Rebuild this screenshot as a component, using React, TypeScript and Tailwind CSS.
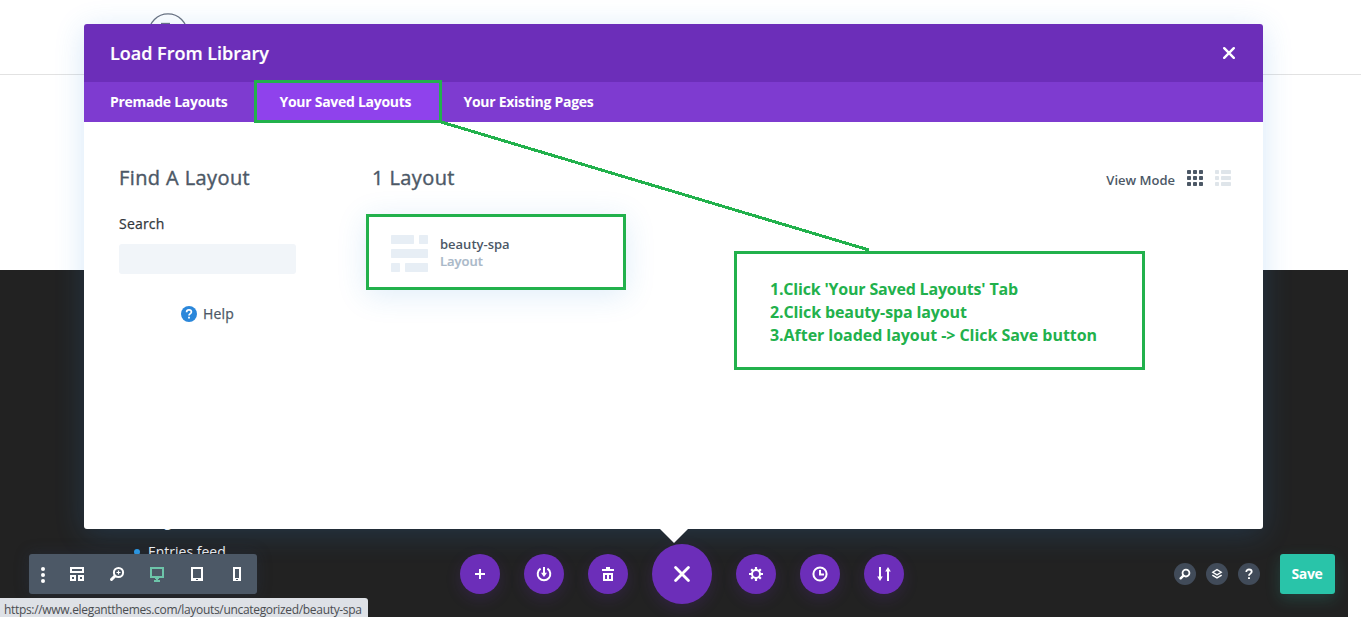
import type { ReactNode } from 'react';

function Icon({ size = 16, className = '', children }: { size?: number; className?: string; children: ReactNode }) {
  return (
    <svg width={size} height={size} viewBox="0 0 16 16" fill="none" stroke="currentColor" strokeWidth="2" className={`shrink-0 ${className}`}>
      {children}
    </svg>
  );
}

const viewportIcons: { name: string; color: string; art: ReactNode }[] = [
  {
    name: 'wireframe',
    color: 'text-white',
    art: (
      <>
        <rect x="2" y="2" width="12" height="4" />
        <rect x="2" y="10" width="4" height="4" />
        <rect x="10" y="10" width="4" height="4" />
      </>
    ),
  },
  {
    name: 'zoom',
    color: 'text-white',
    art: (
      <>
        <circle cx="9.5" cy="6.5" r="4.6" />
        <path d="M6 10l-3.5 3.5" strokeWidth="3" strokeLinecap="round" />
        <path d="M7.5 6.5h4M9.5 4.5v4" strokeWidth="1.2" />
      </>
    ),
  },
  {
    name: 'desktop',
    color: 'text-[#6dc4a9]',
    art: (
      <>
        <rect x="2" y="2" width="12" height="9" />
        <path d="M6 12h4M7 13h2M5 15h6" />
      </>
    ),
  },
  {
    name: 'tablet',
    color: 'text-white',
    art: (
      <>
        <rect x="3" y="2" width="10" height="12" />
        <path d="M3 13h10" />
        <path d="M7 13.5h2" stroke="#4c5866" strokeWidth="1" />
      </>
    ),
  },
  {
    name: 'phone',
    color: 'text-white',
    art: (
      <>
        <rect x="5" y="2" width="6" height="12" />
        <path d="M5 13h6" />
        <path d="M7 13.5h2" stroke="#4c5866" strokeWidth="1" />
      </>
    ),
  },
];

const actions: { name: string; art: ReactNode; big?: boolean }[] = [
  { name: 'add', art: <path d="M3 8h10M8 3v10" /> },
  {
    name: 'load',
    art: (
      <>
        <path d="M4.6 2.7a6.3 6.3 0 1 0 6.8 0" />
        <path d="M8 1v7" />
        <path d="M5 6.8h6L8 11z" fill="currentColor" stroke="none" />
      </>
    ),
  },
  {
    name: 'clear',
    art: (
      <>
        <path d="M2 4h12" />
        <path d="M6 2h4" />
        <path d="M4 8v6h8V8z" />
        <path d="M8 7v7" />
      </>
    ),
  },
  { name: 'close', big: true, art: <path d="M1.6 1.6l12.8 12.8M14.4 1.6L1.6 14.4" strokeWidth="2.8" strokeLinecap="round" /> },
  {
    name: 'settings',
    art: (
      <>
        <circle cx="8" cy="8" r="4" />
        <path
          d="M8 4V1M8 12v3M4 8H1M12 8h3M5.2 5.2L3.2 3.2M10.8 5.2l2-2M5.2 10.8l-2 2M10.8 10.8l2 2"
          strokeWidth="2.2"
        />
      </>
    ),
  },
  {
    name: 'history',
    art: (
      <>
        <circle cx="8" cy="8" r="6.6" />
        <path d="M8 4v4.6h4" />
      </>
    ),
  },
  {
    name: 'portability',
    art: (
      <>
        <path d="M4 1v10M12 5v10" />
        <path d="M1.2 10.5h5.6L4 15zM9.2 5.5h5.6L12 1z" fill="currentColor" stroke="none" />
      </>
    ),
  },
];

const helpers: ReactNode[] = [
  <>
    <circle cx="9.3" cy="6.7" r="4.6" strokeWidth="2.4" />
    <path d="M5.6 10.4l-3.4 3.4" strokeWidth="3.2" strokeLinecap="round" />
  </>,
  <>
    <path d="M8 2.2l5.6 3.5L8 9.2 2.4 5.7z" strokeWidth="1.8" />
    <path d="M1.8 9.5L8 13.3l6.2-3.8" strokeWidth="2" />
  </>,
  <>
    <path d="M4.4 5.2C4.4 3.2 5.9 2 8 2s3.6 1.3 3.6 3c0 2.4-3.6 2.6-3.6 5.2" strokeWidth="2.4" />
    <path d="M6.7 13.5h2.6" strokeWidth="2.6" />
  </>,
];

function Modal() {
  return (
    <section className="absolute left-[84px] top-6 flex h-[505px] w-[1179px] flex-col rounded-[3px] bg-white shadow-[0_5px_30px_rgba(43,135,218,0.2)]">
      <header className="flex h-[58px] shrink-0 items-center justify-between rounded-t-[3px] bg-[#6c2eb9] pl-[26px] pr-7 text-white">
        <h1 className="text-[18px] font-semibold [-webkit-text-stroke:0.2px_currentColor]">Load From Library</h1>
        <svg width="12" height="12" viewBox="0 0 12 12" stroke="currentColor" strokeWidth="2.4" strokeLinecap="round">
          <path d="M1.2 1.2l9.6 9.6M10.8 1.2L1.2 10.8" />
        </svg>
      </header>
      <nav className="flex h-10 shrink-0 bg-[#7e3bd0] text-[14px] font-bold tracking-[-0.28px] text-white">
        <div className="flex w-[170px] items-center pb-0.5 pl-[26px]">Premade Layouts</div>
        <div className="-mb-px -mt-0.5 flex w-[188px] items-center border-[3px] border-[#22b14c] bg-[#8f42ec] pl-[22.5px]">
          Your Saved Layouts
        </div>
        <div className="flex items-center pb-0.5 pl-[21.5px]">Your Existing Pages</div>
      </nav>
      <div className="flex flex-1 text-[#4c5866]">
        <aside className="w-[282px] pl-[35px] pt-[42px]">
          <h2 className="text-[20px] leading-7 tracking-[0.4px] [-webkit-text-stroke:0.4px_currentColor]">Find A Layout</h2>
          <label className="mt-[22px] block text-[14px] leading-5 tracking-[0.2px] text-[#32373c] [-webkit-text-stroke:0.25px_currentColor]">
            Search
          </label>
          <div className="mt-2.5 h-[30px] w-[177px] rounded-[3px] bg-[#f1f5f9]" />
          <div className="ml-[62px] mt-[30px] flex items-center gap-1.5 text-[14px] leading-5 tracking-[0.2px] [-webkit-text-stroke:0.25px_currentColor]">
            <svg width="16" height="16" viewBox="0 0 16 16" fill="none">
              <circle cx="8" cy="8" r="8" fill="#2b87da" />
              <path d="M5.6 6.2C5.6 4.7 6.6 3.9 8 3.9s2.4.8 2.4 2.1C10.4 7.6 8 7.7 8 9.6" stroke="#fff" strokeWidth="1.7" />
              <path d="M7.1 11.7h1.8" stroke="#fff" strokeWidth="1.8" />
            </svg>
            Help
          </div>
        </aside>
        <div className="flex-1 pr-8 pt-[42px]">
          <div className="flex justify-between">
            <h2 className="pl-1.5 text-[20px] leading-7 tracking-[0.4px] [-webkit-text-stroke:0.4px_currentColor]">1 Layout</h2>
            <div className="flex h-7 items-center">
              <span className="mr-3 mt-1.5 text-[13px] font-semibold">View Mode</span>
              <svg width="16" height="16" viewBox="0 0 16 16" fill="currentColor" className="mr-3">
                {[0, 6, 12].map((y) => [0, 6, 12].map((x) => <rect key={`${x}-${y}`} x={x} y={y} width="4" height="4" rx="0.8" />))}
              </svg>
              <svg width="16" height="16" viewBox="0 0 16 16" fill="#dfe5ea">
                {[0, 6, 12].map((y) => (
                  <g key={y}>
                    <rect y={y} width="4" height="4" rx="0.8" />
                    <rect x="6" y={y} width="10" height="4" rx="0.8" />
                  </g>
                ))}
              </svg>
            </div>
          </div>
          <div className="mt-[22px] flex h-[76px] w-[260px] items-center border-[3px] border-[#22b14c] bg-white pl-[22px] shadow-[0_5px_30px_rgba(43,135,218,0.15)]">
            <svg width="37" height="37" viewBox="0 0 37 37" fill="#e7eef5" className="mt-0.5">
              <rect width="23" height="9" rx="0.7" />
              <rect x="28" width="9" height="9" rx="0.7" />
              <rect y="14" width="37" height="9" rx="0.7" />
              <rect y="28" width="9" height="9" rx="0.7" />
              <rect x="14" y="28" width="23" height="9" rx="0.7" />
            </svg>
            <div className="ml-3 mt-0.5 text-[13px] font-semibold leading-[17px]">
              <div>beauty-spa</div>
              <div className="text-[#a9b8c8] [-webkit-text-stroke:0.2px_currentColor]">Layout</div>
            </div>
          </div>
        </div>
      </div>
      <svg width="28" height="14" viewBox="0 0 28 14" className="absolute left-[576px] top-[505px]" fill="#fff">
        <path d="M0 0h28L14 14z" />
      </svg>
    </section>
  );
}

function BuilderBar() {
  return (
    <footer className="absolute left-0 top-[544px] flex h-[60px] w-[1361px] items-center pl-[29px] font-semibold text-white">
      <div className="flex h-10 w-[228px] items-center rounded-[3px] bg-[#4c5866] shadow-[0_0_15px_rgba(43,60,90,0.3)]">
        <div className="flex w-7 justify-center">
          <svg width="4" height="16" viewBox="0 0 4 16" fill="currentColor" className="mt-0.5">
            <circle cx="2" cy="2" r="2" />
            <circle cx="2" cy="8" r="2" />
            <circle cx="2" cy="14" r="2" />
          </svg>
        </div>
        {viewportIcons.map((i) => (
          <div key={i.name} className="flex w-10 justify-center">
            <Icon className={i.color}>{i.art}</Icon>
          </div>
        ))}
      </div>
      <div className="ml-[203px] flex items-center gap-6">
        {actions.map((a) => (
          <div
            key={a.name}
            className={`flex items-center justify-center rounded-full bg-[#6c2eb9] shadow-[0_5px_15px_rgba(108,46,185,0.2)] ${a.big ? 'size-[60px]' : 'size-10'}`}
          >
            <Icon>{a.art}</Icon>
          </div>
        ))}
      </div>
      <div className="ml-[270px] flex items-center gap-2.5">
        {helpers.map((art, i) => (
          <div key={i} className="flex size-[22px] items-center justify-center rounded-full bg-[#414b59]">
            <Icon size={12}>{art}</Icon>
          </div>
        ))}
      </div>
      <div className="ml-5 flex h-10 w-[55px] items-center justify-center rounded-[3px] bg-[#29c4a9] pb-0.5 pr-px text-[14px] font-bold tracking-[-0.3px] shadow-[0_5px_15px_rgba(41,196,169,0.2)]">
        Save
      </div>
    </footer>
  );
}

export default function App() {
  return (
    <main className="relative h-[617px] w-[1361px] overflow-hidden bg-white font-['Open_Sans',sans-serif]">
      <div className="h-[75px] border-b border-[#e2e2e2] pl-[148px] pt-[13px]">
        <svg width="40" height="40" viewBox="0 0 40 40" fill="none" stroke="#6b7280" strokeWidth="1.3">
          <circle cx="20" cy="20" r="19.2" />
          <path d="M13 10.5h9" />
        </svg>
      </div>
      <div className="h-[195px]" />
      <div className="h-[347px] w-[1348px] bg-[#222] pl-[134px] pt-[237px] text-[14px] leading-7 text-white">
        <div className="mb-[3px] flex items-center gap-2">
          <span className="size-1.5 rounded-full bg-[#2ea3f2]" />
          <span className="-ml-1.5 pl-px">Blog feed</span>
        </div>
        <div className="flex items-center gap-2">
          <span className="size-1.5 rounded-full bg-[#2ea3f2]" />
          <span>Entries feed</span>
        </div>
      </div>

      <Modal />
      <BuilderBar />

      <div className="absolute left-0 top-[598px] flex h-[19px] w-[368px] items-center rounded-tr-[3px] bg-[#dee1e6] pl-1 pt-1 text-[12px] tracking-[-0.32px] text-[#4a4d51]">
        <span className="whitespace-nowrap">https://www.elegantthemes.com/layouts/uncategorized/beauty-spa</span>
      </div>

      <svg width="430" height="131" viewBox="0 0 430 131" className="absolute left-[441px] top-[120px]" shapeRendering="crispEdges">
        <path d="M0 2L428 130" stroke="#22b14c" strokeWidth="3" />
      </svg>
      <div className="absolute left-[734px] top-[251px] h-[119px] w-[411px] border-[3px] border-[#22b14c] bg-white pl-[33px] pt-6 font-['Open_Sans',sans-serif] text-[16px] font-bold leading-[23px] tracking-[-0.1px] text-[#22b14c]">
        <p className="tracking-[-0.19px]">1.Click 'Your Saved Layouts' Tab</p>
        <p className="tracking-[-0.12px]">2.Click beauty-spa layout</p>
        <p className="tracking-[-0.05px]">3.After loaded layout -&gt; Click Save button</p>
      </div>
    </main>
  );
}
